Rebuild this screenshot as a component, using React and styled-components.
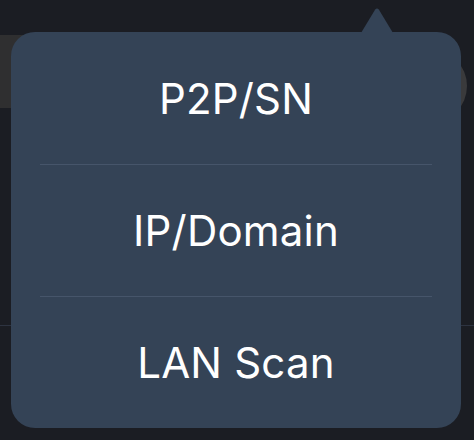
import React from "react";
import styled, { createGlobalStyle } from "styled-components";

const Global = createGlobalStyle`
  html, body { margin: 0; padding: 0; background: #1b1d23; }
  body { width: 474px; height: 440px; overflow: hidden; font-family: Inter, "Noto Sans", sans-serif; }
`;

const Page = styled.div`
  position: relative;
  width: 474px;
  height: 440px;
  background: #1b1d23;
  display: flex;
  flex-direction: column;
`;

const HeaderRow = styled.div`
  display: flex;
  align-items: center;
  justify-content: space-between;
  margin-top: 35px;
  height: 73px;
`;

const Card = styled.div`
  width: 200px;
  height: 73px;
  background: #2f2f30;
`;

const RoundButton = styled.div`
  width: 74px;
  height: 74px;
  border-radius: 50%;
  background: #3a3a3c;
  margin-right: 7px;
  margin-top: 28px;
`;

const Divider = styled.div`
  margin-top: 217px;
  height: 1px;
  background: #2d3340;
`;

const Popover = styled.div`
  position: absolute;
  top: 32px;
  left: 11px;
  width: 450px;
  background: #344356;
  border-radius: 24px;
  display: flex;
  flex-direction: column;
  padding: 0 29px;
  box-sizing: border-box;
`;

const Arrow = styled.svg`
  position: absolute;
  top: -24px;
  left: 350px;
`;

const Item = styled.div`
  height: 132px;
  display: flex;
  align-items: center;
  justify-content: center;
  color: #ffffff;
  font-size: 42px;
  font-weight: 400;
  letter-spacing: 0.2px;
  border-top: ${(p) => (p.$first ? "none" : "1px solid #46556a")};
  box-sizing: border-box;
`;

const items = ["P2P/SN", "IP/Domain", "LAN Scan"];

export default function App() {
  return (
    <>
      <Global />
      <Page>
        <HeaderRow>
          <Card />
          <RoundButton />
        </HeaderRow>
        <Divider />
        <Popover>
          <Arrow width="32" height="25" viewBox="0 0 32 25">
            <path d="M0 25 L14.2 1.6 Q16 -0.6 17.8 1.6 L32 25 Z" fill="#344356" />
          </Arrow>
          {items.map((t, i) => (
            <Item key={t} $first={i === 0}>{t}</Item>
          ))}
        </Popover>
      </Page>
    </>
  );
}
